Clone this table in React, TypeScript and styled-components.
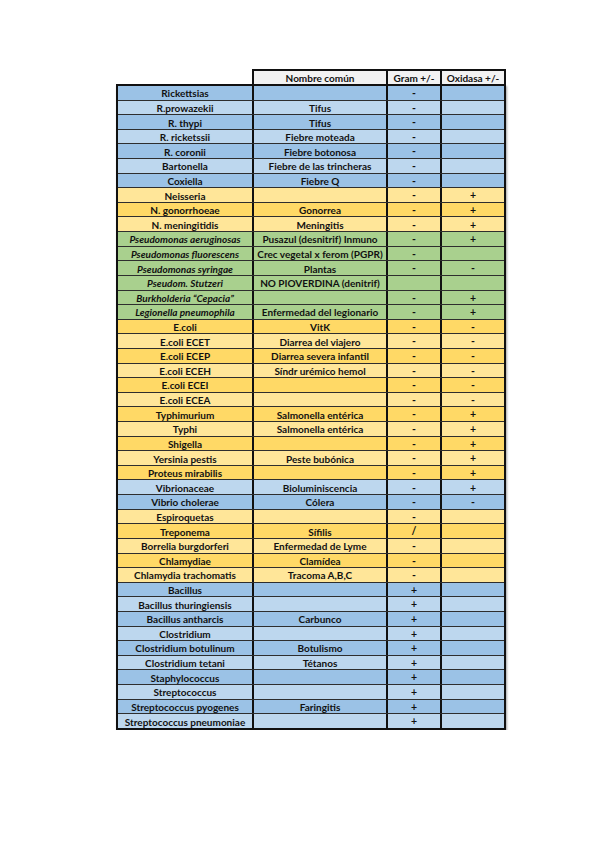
import React from "react";
import styled, { createGlobalStyle } from "styled-components";

type Tone = "blue" | "blueLight" | "gold" | "goldLight" | "green";

interface Row {
  name: string;
  common?: string;
  gram?: string;
  oxi?: string;
  tone: Tone;
  italic?: boolean;
}

const tones: Record<Tone, string> = {
  blue: "#9bc2e6",
  blueLight: "#bdd7ee",
  gold: "#ffd966",
  goldLight: "#ffe699",
  green: "#a9d08e",
};

const rows: Row[] = [
  { name: "Rickettsias", gram: "-", tone: "blue" },
  { name: "R.prowazekii", common: "Tifus", gram: "-", tone: "blueLight" },
  { name: "R. thypi", common: "Tifus", gram: "-", tone: "blue" },
  { name: "R. ricketssii", common: "Fiebre moteada", gram: "-", tone: "blueLight" },
  { name: "R. coronii", common: "Fiebre botonosa", gram: "-", tone: "blue" },
  { name: "Bartonella", common: "Fiebre de las trincheras", gram: "-", tone: "blueLight" },
  { name: "Coxiella", common: "Fiebre Q", gram: "-", tone: "blue" },
  { name: "Neisseria", gram: "-", oxi: "+", tone: "goldLight" },
  { name: "N. gonorrhoeae", common: "Gonorrea", gram: "-", oxi: "+", tone: "gold" },
  { name: "N. meningitidis", common: "Meningitis", gram: "-", oxi: "+", tone: "goldLight" },
  { name: "Pseudomonas aeruginosas", common: "Pusazul (desnitrif) Inmuno", gram: "-", oxi: "+", tone: "green", italic: true },
  { name: "Pseudomonas fluorescens", common: "Crec vegetal x ferom (PGPR)", gram: "-", tone: "green", italic: true },
  { name: "Pseudomonas syringae", common: "Plantas", gram: "-", oxi: "-", tone: "green", italic: true },
  { name: "Pseudom. Stutzeri", common: "NO PIOVERDINA (denitrif)", tone: "green", italic: true },
  { name: "Burkholderia \u201cCepacia\u201d", gram: "-", oxi: "+", tone: "green", italic: true },
  { name: "Legionella pneumophila", common: "Enfermedad del legionario", gram: "-", oxi: "+", tone: "green", italic: true },
  { name: "E.coli", common: "VitK", gram: "-", oxi: "-", tone: "gold" },
  { name: "E.coli ECET", common: "Diarrea del viajero", gram: "-", oxi: "-", tone: "goldLight" },
  { name: "E.coli  ECEP", common: "Diarrea severa infantil", gram: "-", oxi: "-", tone: "gold" },
  { name: "E.coli ECEH", common: "Síndr urémico hemol", gram: "-", oxi: "-", tone: "goldLight" },
  { name: "E.coli ECEI", gram: "-", oxi: "-", tone: "gold" },
  { name: "E.coli ECEA", gram: "-", oxi: "-", tone: "goldLight" },
  { name: "Typhimurium", common: "Salmonella entérica", gram: "-", oxi: "+", tone: "gold" },
  { name: "Typhi", common: "Salmonella entérica", gram: "-", oxi: "+", tone: "goldLight" },
  { name: "Shigella", gram: "-", oxi: "+", tone: "gold" },
  { name: "Yersinia pestis", common: "Peste bubónica", gram: "-", oxi: "+", tone: "goldLight" },
  { name: "Proteus mirabilis", gram: "-", oxi: "+", tone: "gold" },
  { name: "Vibrionaceae", common: "Bioluminiscencia", gram: "-", oxi: "+", tone: "blueLight" },
  { name: "Vibrio cholerae", common: "Cólera", gram: "-", oxi: "-", tone: "blue" },
  { name: "Espiroquetas", gram: "-", tone: "goldLight" },
  { name: "Treponema", common: "Sífilis", gram: "/", tone: "gold" },
  { name: "Borrelia burgdorferi", common: "Enfermedad de Lyme", gram: "-", tone: "goldLight" },
  { name: "Chlamydiae", common: "Clamídea", gram: "-", tone: "gold" },
  { name: "Chlamydia trachomatis", common: "Tracoma A,B,C", gram: "-", tone: "goldLight" },
  { name: "Bacillus", gram: "+", tone: "blue" },
  { name: "Bacillus thuringiensis", gram: "+", tone: "blueLight" },
  { name: "Bacillus antharcis", common: "Carbunco", gram: "+", tone: "blue" },
  { name: "Clostridium", gram: "+", tone: "blueLight" },
  { name: "Clostridium botulinum", common: "Botulismo", gram: "+", tone: "blue" },
  { name: "Clostridium tetani", common: "Tétanos", gram: "+", tone: "blueLight" },
  { name: "Staphylococcus", gram: "+", tone: "blue" },
  { name: "Streptococcus", gram: "+", tone: "blueLight" },
  { name: "Streptococcus pyogenes", common: "Faringitis", gram: "+", tone: "blue" },
  { name: "Streptococcus pneumoniae", gram: "+", tone: "blueLight" },
];

const GlobalStyle = createGlobalStyle`
  html, body {
    margin: 0;
    padding: 0;
    background: #ffffff;
  }
  body {
    font-family: Lato, "Open Sans", "Liberation Sans", sans-serif;
    color: #111111;
  }
`;

const Page = styled.div`
  padding: 69px 0 0 116px;
`;

const columns = "136px 134px 54px 62px";

const HeaderRow = styled.div`
  display: grid;
  grid-template-columns: ${columns};
  width: 390px;
  box-sizing: border-box;
  padding-left: 2px;
  height: 15px;
`;

const HeaderCell = styled.div<{ $blank?: boolean; $last?: boolean }>`
  display: flex;
  align-items: center;
  justify-content: center;
  box-sizing: border-box;
  font-size: 10px;
  font-weight: 700;
  background: ${(p) => (p.$blank ? "transparent" : "#f2f2f2")};
  border-top: ${(p) => (p.$blank ? "none" : "2px solid #111")};
  border-right: 2px solid #111;
  margin-right: ${(p) => (p.$last ? "-2px" : "0")};
  padding-top: 1px;
`;

const Body = styled.div`
  width: 390px;
  box-sizing: border-box;
  border: 2px solid #111;
  box-shadow: 1px 2px 2px rgba(0, 0, 0, 0.35);
`;

const DataRow = styled.div<{ $tone: Tone }>`
  display: grid;
  grid-template-columns: ${columns};
  height: 14.62px;
  box-sizing: border-box;
  background: ${(p) => tones[p.$tone]};
  border-bottom: 1px solid #2e2e2e;

  &:last-child {
    border-bottom: none;
    height: 13.62px;
  }
`;

const Cell = styled.div<{ $italic?: boolean; $last?: boolean }>`
  display: flex;
  align-items: center;
  justify-content: center;
  box-sizing: border-box;
  font-size: 10px;
  font-weight: 700;
  font-style: ${(p) => (p.$italic ? "italic" : "normal")};
  white-space: nowrap;
  overflow: visible;
  border-right: ${(p) => (p.$last ? "none" : "2px solid #111")};
  line-height: 1;
  padding-top: 1px;
`;

const Sign = styled(Cell)`
  font-size: 10.5px;
`;

export default function App() {
  return (
    <Page>
      <GlobalStyle />
      <HeaderRow>
        <HeaderCell $blank />
        <HeaderCell>Nombre común</HeaderCell>
        <HeaderCell>Gram +/-</HeaderCell>
        <HeaderCell $last>Oxidasa +/-</HeaderCell>
      </HeaderRow>
      <Body>
        {rows.map((r, i) => (
          <DataRow key={i} $tone={r.tone}>
            <Cell $italic={r.italic}>{r.name}</Cell>
            <Cell>{r.common ?? ""}</Cell>
            <Sign>{r.gram ?? ""}</Sign>
            <Sign $last>{r.oxi ?? ""}</Sign>
          </DataRow>
        ))}
      </Body>
    </Page>
  );
}
